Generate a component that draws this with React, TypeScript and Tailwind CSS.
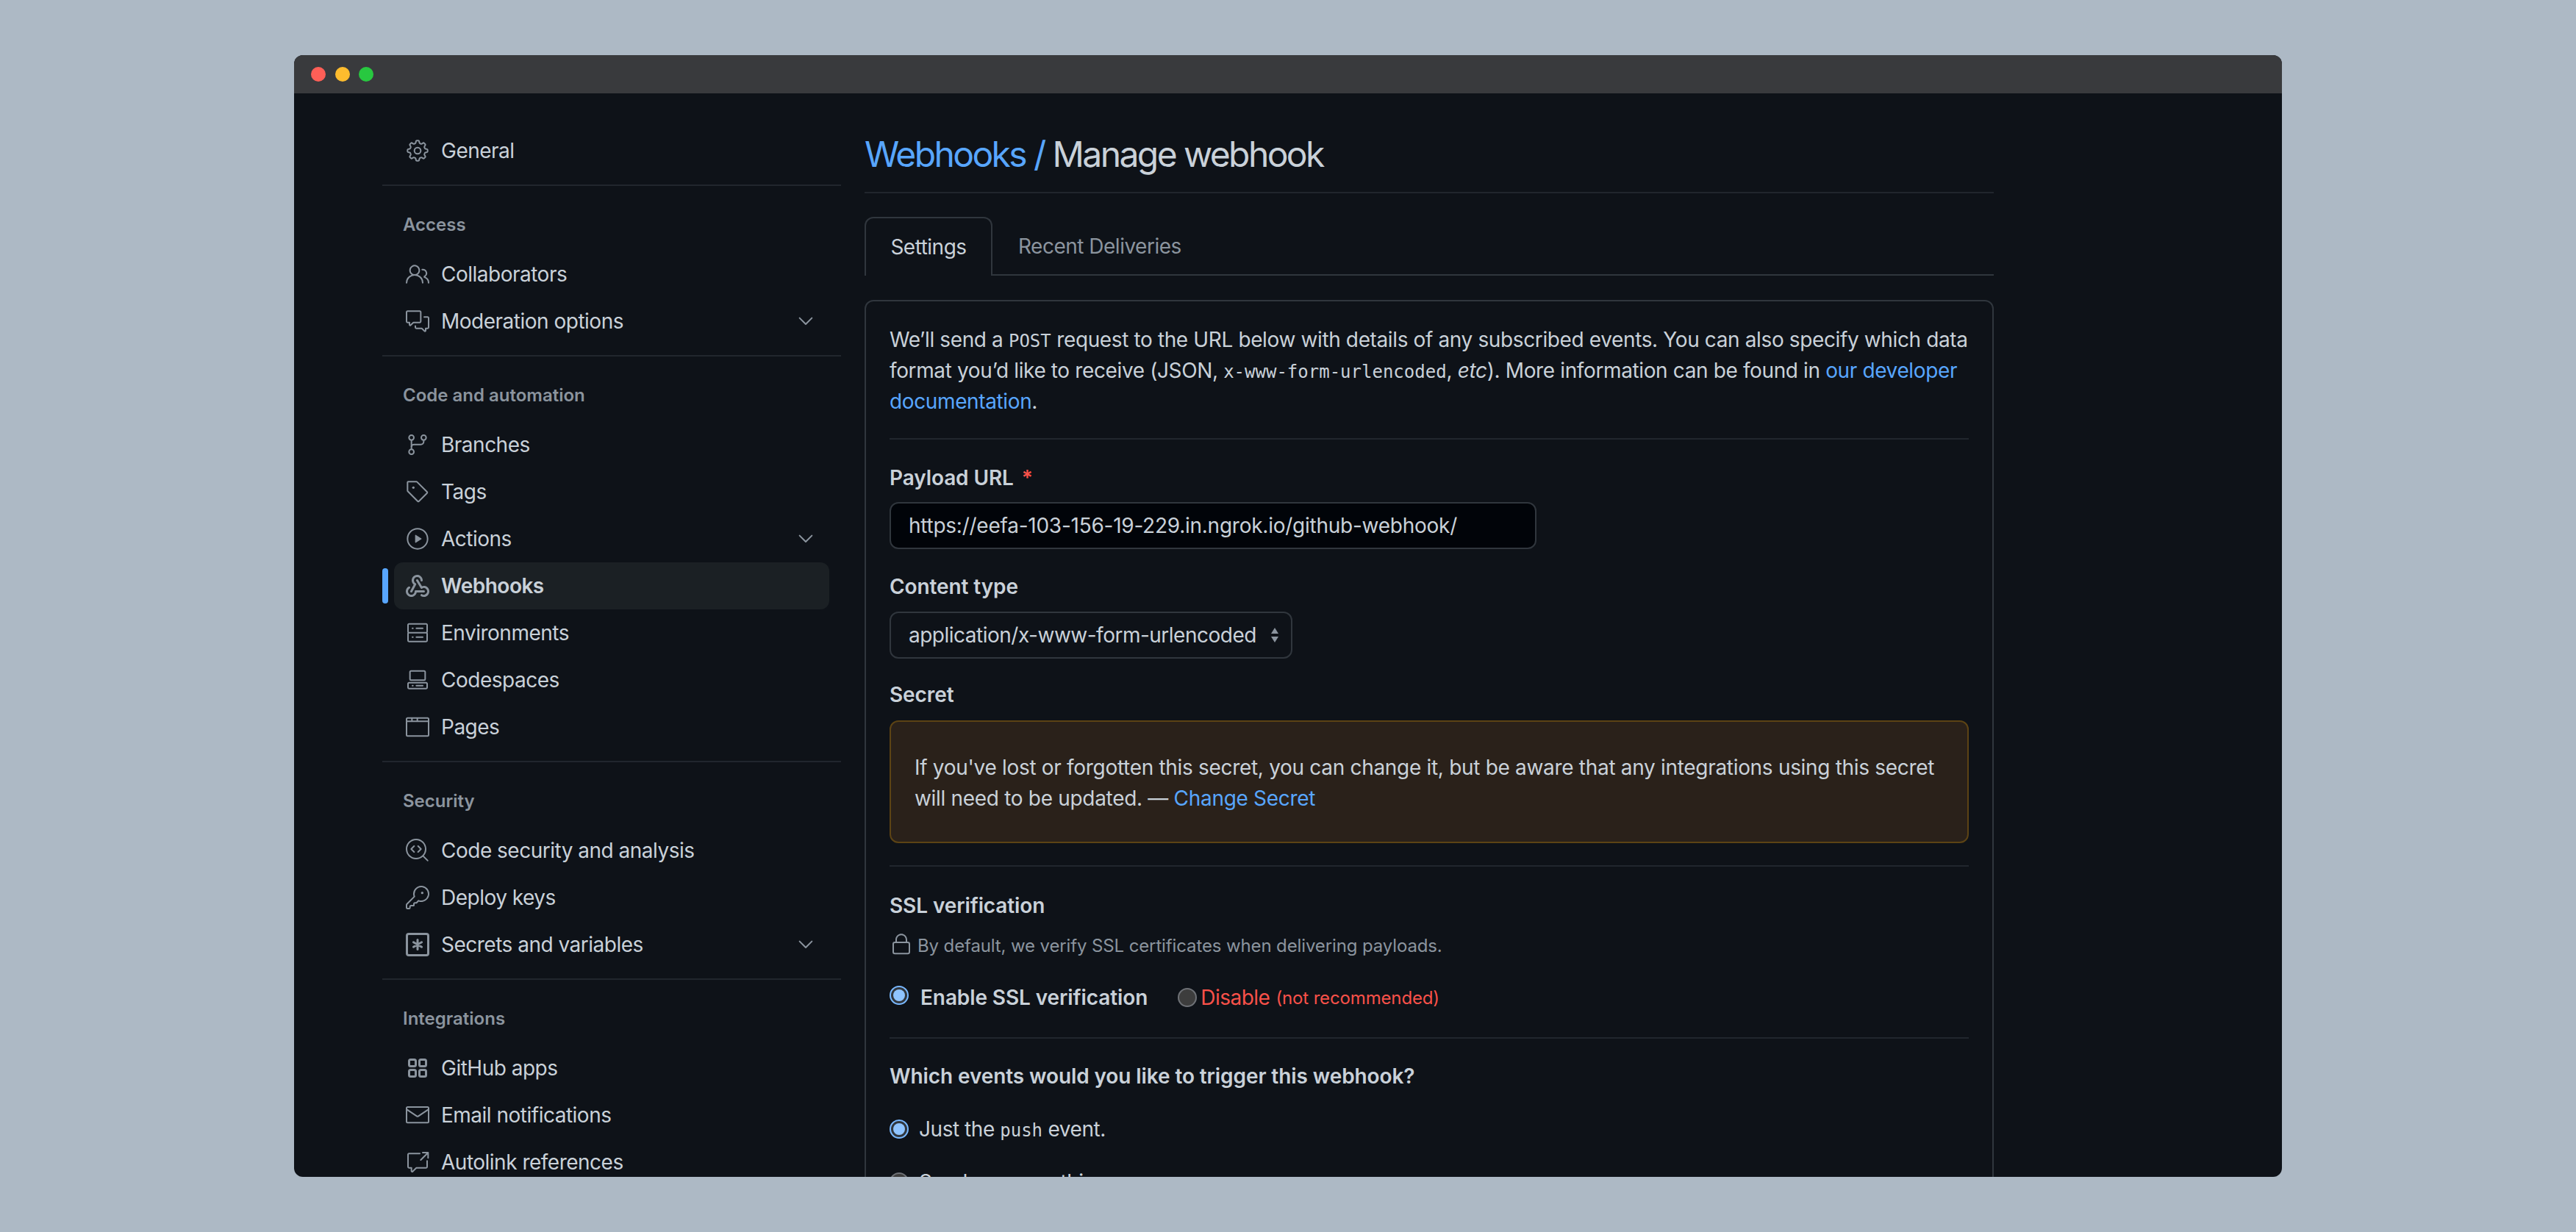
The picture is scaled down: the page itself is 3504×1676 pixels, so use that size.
import type { ComponentType } from 'react'
import {
  GoBrowser,
  GoChevronDown,
  GoCodescan,
  GoCodespaces,
  GoCommentDiscussion,
  GoCrossReference,
  GoGear,
  GoGitBranch,
  GoKey,
  GoLock,
  GoMail,
  GoPeople,
  GoPlay,
  GoServer,
  GoTag,
} from 'react-icons/go'

type IconProps = { className?: string }

type NavItem = {
  label: string
  icon: ComponentType<IconProps>
  chevron?: boolean
  active?: boolean
}

// octicons missing from this react-icons build
function GoApps({ className }: IconProps) {
  return (
    <svg viewBox="0 0 16 16" className={className} fill="none" stroke="currentColor" strokeWidth="1.5">
      <rect x="2.25" y="2.25" width="4.5" height="4.5" rx="1" />
      <rect x="9.25" y="2.25" width="4.5" height="4.5" rx="1" />
      <rect x="2.25" y="9.25" width="4.5" height="4.5" rx="1" />
      <rect x="9.25" y="9.25" width="4.5" height="4.5" rx="1" />
    </svg>
  )
}

function GoKeyAsterisk({ className }: IconProps) {
  return (
    <svg viewBox="0 0 16 16" className={className} fill="none" stroke="currentColor" strokeWidth="1.5" strokeLinecap="round">
      <rect x="0.75" y="0.75" width="14.5" height="14.5" rx="1.25" />
      <path d="M8 4.75v6.5M5.2 6.4l5.6 3.2M10.8 6.4l-5.6 3.2" />
    </svg>
  )
}

function GoWebhook({ className }: IconProps) {
  return (
    <svg viewBox="0 0 16 16" className={className} fill="currentColor">
      <path d="M5.5 4.25a2.25 2.25 0 0 1 4.5 0 .75.75 0 0 0 1.5 0 3.75 3.75 0 1 0-6.14 2.889l-2.272 4.258a.75.75 0 0 0 1.324.706L7 7.25a.75.75 0 0 0-.309-1.015A2.25 2.25 0 0 1 5.5 4.25Z" />
      <path d="M7.364 3.607a.75.75 0 0 1 1.03.257l2.608 4.349a3.75 3.75 0 1 1-.628 6.785.75.75 0 0 1 .752-1.299 2.25 2.25 0 1 0-.033-3.88.75.75 0 0 1-1.03-.256L7.107 4.636a.75.75 0 0 1 .257-1.03Z" />
      <path d="M2.9 8.776A.75.75 0 0 1 2.625 9.8 2.25 2.25 0 1 0 6 11.75a.75.75 0 0 1 .75-.751h5.5a.75.75 0 0 1 0 1.5H7.425a3.751 3.751 0 1 1-5.55-3.998.75.75 0 0 1 1.024.274Z" />
    </svg>
  )
}

const sections: { title: string; items: NavItem[] }[] = [
  {
    title: 'Access',
    items: [
      { label: 'Collaborators', icon: GoPeople },
      { label: 'Moderation options', icon: GoCommentDiscussion, chevron: true },
    ],
  },
  {
    title: 'Code and automation',
    items: [
      { label: 'Branches', icon: GoGitBranch },
      { label: 'Tags', icon: GoTag },
      { label: 'Actions', icon: GoPlay, chevron: true },
      { label: 'Webhooks', icon: GoWebhook, active: true },
      { label: 'Environments', icon: GoServer },
      { label: 'Codespaces', icon: GoCodespaces },
      { label: 'Pages', icon: GoBrowser },
    ],
  },
  {
    title: 'Security',
    items: [
      { label: 'Code security and analysis', icon: GoCodescan },
      { label: 'Deploy keys', icon: GoKey },
      { label: 'Secrets and variables', icon: GoKeyAsterisk, chevron: true },
    ],
  },
  {
    title: 'Integrations',
    items: [
      { label: 'GitHub apps', icon: GoApps },
      { label: 'Email notifications', icon: GoMail },
      { label: 'Autolink references', icon: GoCrossReference },
    ],
  },
]

function NavRow({ item }: { item: NavItem }) {
  const Icon = item.icon
  return (
    <div className="relative h-16 px-4">
      {item.active && <span className="absolute left-0 top-2 h-12 w-2 rounded-md bg-[#58a6ff]" />}
      <div
        className={
          'flex h-16 items-center rounded-xl pl-4 pr-4 ' + (item.active ? 'bg-[#1b2024] font-semibold' : '')
        }
      >
        <Icon className="h-8 w-8 shrink-0 text-[#8b949e]" />
        <span className="ml-4 text-[28px] text-[#c9d1d9]">{item.label}</span>
        {item.chevron && <GoChevronDown className="ml-auto h-8 w-8 text-[#8b949e]" />}
      </div>
    </div>
  )
}

function Sidebar() {
  return (
    <aside className="w-[624px] shrink-0 pt-[46px]">
      <NavRow item={{ label: 'General', icon: GoGear }} />
      {sections.map((section) => (
        <section key={section.title}>
          <div className="mt-[14px] h-0.5 bg-[#21262d]" />
          <div className="mb-[17px] mt-[35px] pl-7 text-[24px] font-semibold leading-9 tracking-normal text-[#8b949e]">
            {section.title}
          </div>
          {section.items.map((item) => (
            <NavRow key={item.label} item={item} />
          ))}
        </section>
      ))}
    </aside>
  )
}

function Radio({ checked, className = '' }: { checked?: boolean; className?: string }) {
  return checked ? (
    <span
      className={
        'flex h-[26px] w-[26px] shrink-0 items-center justify-center rounded-full border-2 border-[#79b8ff] bg-[#30363d] ' +
        className
      }
    >
      <span className="h-[16px] w-[16px] rounded-full bg-[#8fc4ff]" />
    </span>
  ) : (
    <span className={'block h-[26px] w-[26px] shrink-0 rounded-full border-2 border-[#6e7176] bg-[#3d3d3d] ' + className} />
  )
}

function Label({ children, className = '' }: { children: React.ReactNode; className?: string }) {
  return (
    <div className={'text-[28px] font-semibold leading-[42px] tracking-[-0.1px] text-[#c9d1d9] ' + className}>
      {children}
    </div>
  )
}

const mono = 'font-["DejaVu_Sans_Mono",monospace] text-[24px] leading-none tracking-normal'

function WebhookForm() {
  return (
    <div className="mt-[33px] rounded-xl border-2 border-[#30363d] px-8 pt-[31px]">
      <p className="text-[28px] leading-[42px] tracking-[-0.375px] text-[#c9d1d9]">
        We’ll send a <code className={mono}>POST</code> request to the URL below with details of any subscribed
        events. You can also specify which data format you’d like to receive (JSON,{' '}
        <code className={mono}>x-www-form-urlencoded</code>, <em>etc</em>). More information can be found in{' '}
        <span className="text-[#58a6ff]">our developer documentation</span>.
      </p>
      <div className="mt-[29px] h-0.5 bg-[#21262d]" />

      <Label className="mt-[31px]">
        Payload URL <span className="ml-1 text-[#f85149]">*</span>
      </Label>
      <div className="mt-3 flex h-16 w-[880px] items-center rounded-xl border-2 border-[#30363d] bg-[#010409] pl-6 text-[28px] tracking-[-0.25px] text-[#c9d1d9]">
        https://eefa-103-156-19-229.in.ngrok.io/github-webhook/
      </div>

      <Label className="mt-[30px]">Content type</Label>
      <div className="mt-[13px] flex h-16 w-[548px] items-center rounded-xl border-2 border-[#30363d] pl-6 text-[28px] text-[#c9d1d9]">
        application/x-www-form-urlencoded
        <svg viewBox="0 0 16 24" className="ml-auto mr-[14px] h-6 w-4 text-[#8b949e]" fill="currentColor">
          <path d="M8 2l5 8H3zM8 22l-5-8h10z" />
        </svg>
      </div>

      <Label className="mt-7">Secret</Label>
      <div className="mt-[14px] rounded-xl border-2 border-[#5c4314] bg-[#2a211a] px-8 pb-[38px] pt-[41px] text-[28px] leading-[42px] tracking-[-0.31px] text-[#c9d1d9]">
        If you've lost or forgotten this secret, you can change it, but be aware that any integrations using this
        secret will need to be updated. — <span className="text-[#58a6ff]">Change Secret</span>
      </div>
      <div className="mt-[30px] h-0.5 bg-[#21262d]" />

      <Label className="mt-8">SSL verification</Label>
      <div className="mt-4 flex h-9 items-center">
        <GoLock className="-mt-1 h-8 w-8 shrink-0 text-[#8b949e]" />
        <span className="ml-[6px] text-[24px] tracking-[-0.125px] text-[#8b949e]">
          By default, we verify SSL certificates when delivering payloads.
        </span>
      </div>
      <div className="mt-[31px] flex h-[42px] items-center">
        <Radio checked className="-mt-1.5" />
        <span className="ml-[16px] text-[28px] font-semibold tracking-[-0.1px] text-[#c9d1d9]">
          Enable SSL verification
        </span>
        <Radio className="ml-[41px]" />
        <span className="ml-[5px] text-[28px] text-[#f85149]">Disable</span>
        <span className="ml-2 pt-0.5 text-[24px] tracking-[-0.15px] text-[#f85149]">(not recommended)</span>
      </div>
      <div className="mt-[33px] h-0.5 bg-[#21262d]" />

      <Label className="mt-[30px]">Which events would you like to trigger this webhook?</Label>
      <div className="mt-[30px] flex h-[42px] items-center">
        <Radio checked />
        <span className="ml-[14px] text-[28px] tracking-[-0.45px] text-[#c9d1d9]">
          Just the <code className={mono}>push</code> event.
        </span>
      </div>
      <div className="mt-[30px] flex h-[42px] items-center">
        <Radio />
        <span className="ml-[14px] text-[28px] text-[#c9d1d9]">Send me everything.</span>
      </div>
    </div>
  )
}

export default function App() {
  return (
    <div className="h-[1676px] w-[3504px] overflow-hidden bg-[#adb9c5] pl-[400px] pt-[75px] font-['Inter',sans-serif] tracking-[-0.5px]">
      <div className="h-[1526px] w-[2704px] overflow-hidden rounded-xl bg-[#0e1218]">
        <div className="flex h-[52px] items-center gap-[12.5px] bg-[#393a3d] pl-[23px]">
          <span className="h-5 w-5 rounded-full bg-[#ff5f57]" />
          <span className="h-5 w-5 rounded-full bg-[#febc2e]" />
          <span className="h-5 w-5 rounded-full bg-[#28c840]" />
        </div>
        <div className="flex gap-8 pl-[120px]">
          <Sidebar />
          <main className="w-[1536px] shrink-0 pt-[47px]">
            <h2 className="border-b-2 border-[#21262d] pb-[15px] text-[48px] leading-[72px] tracking-[-2.6px] text-[#c9d1d9]">
              <span className="text-[#58a6ff]">Webhooks /</span> Manage webhook
            </h2>
            <div className="mt-8 flex h-[80px] border-b-2 border-[#30363d]">
              <div className="-mb-0.5 flex h-[80px] w-[174px] items-center justify-center rounded-t-xl border-2 border-b-0 border-[#30363d] bg-[#0e1218] text-[28px] text-[#c9d1d9]">
                Settings
              </div>
              <div className="flex items-center pl-[35px] pt-0.5 text-[28px] text-[#8b949e]">Recent Deliveries</div>
            </div>
            <WebhookForm />
          </main>
        </div>
      </div>
    </div>
  )
}
